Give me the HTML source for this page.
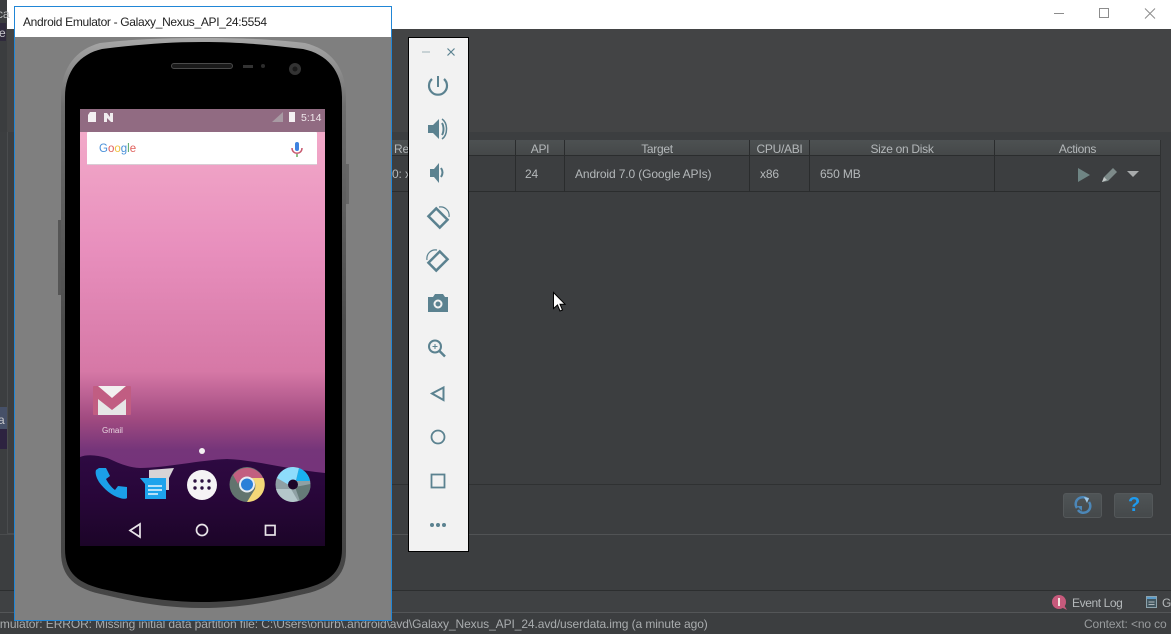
<!DOCTYPE html>
<html><head><meta charset="utf-8">
<style>
html,body{margin:0;padding:0;background:#3c3f41}
#r{position:relative;width:1171px;height:634px;overflow:hidden;background:#3c3e40;font-family:"Liberation Sans",sans-serif;font-size:12px;color:#b4b8ba}
.a{position:absolute}
.t{position:absolute;white-space:nowrap;letter-spacing:-.12px}
.hd{position:absolute;top:142px;height:15px;line-height:15px;text-align:center;color:#b3b7b9;font-size:12px;letter-spacing:-.3px}
.sep{position:absolute;width:1px;background:#2a2c2d}
</style></head><body>
<div id="r">
<!-- app chrome -->
<div class="a" style="left:0;top:0;width:1171px;height:29px;background:#fff"></div>
<div class="a" style="left:0;top:29px;width:1171px;height:103px;background:#434445"></div>
<div class="a" style="left:0;top:132px;width:1171px;height:458px;background:#3c3e40"></div>
<svg class="a" style="left:1050px;top:5px" width="115" height="18" fill="none" stroke="#8c8c8c" stroke-width="1">
<path d="M4 8.500H14"/><rect x="49.500" y="3.500" width="9" height="9"/><path d="M95 3.500L105 13.500M105 3.500L95 13.500"/>
</svg>
<div class="a" style="left:0;top:0;width:7px;height:132px;background:#3b3d3f"></div>
<div class="a" style="left:0;top:23px;width:6px;height:18px;background:#2f2a3c"></div>
<div class="t" style="left:-3px;top:7px;font-size:12px;line-height:14px;color:#b8babb">ca</div>
<div class="t" style="left:-1px;top:26px;font-size:12px;line-height:14px;color:#c8c8cc">e</div>
<div class="a" style="left:0;top:407px;width:7px;height:22px;background:#465068"></div>
<div class="a" style="left:0;top:429px;width:7px;height:20px;background:#2d2340"></div>
<div class="t" style="left:-2px;top:413px;font-size:12px;line-height:14px;color:#c8c8cc">a</div>
<div class="a" style="left:7px;top:132px;width:7px;height:402px;border-left:1px solid #4a4c4e;border-bottom:1px solid #4a4c4e;box-sizing:border-box"></div>
<div class="a" style="left:0;top:534px;width:14px;height:1px;background:#4a4c4e"></div>

<!-- table -->
<div class="a" style="left:392px;top:140px;width:768px;height:15px;background:linear-gradient(#4d5152,#454849)"></div>
<div class="a" style="left:392px;top:155px;width:768px;height:1px;background:#2b2d2e"></div>
<div class="a" style="left:392px;top:191px;width:768px;height:1px;background:#2b2d2e"></div>
<div class="a" style="left:1160px;top:140px;width:1px;height:344px;background:#2f3132"></div>
<div class="a" style="left:392px;top:484px;width:769px;height:1px;background:#2f3132"></div>
<div class="sep" style="left:515px;top:140px;height:52px"></div>
<div class="sep" style="left:564px;top:140px;height:52px"></div>
<div class="sep" style="left:749px;top:140px;height:52px"></div>
<div class="sep" style="left:809px;top:140px;height:52px"></div>
<div class="sep" style="left:994px;top:140px;height:52px"></div>
<div class="t" style="left:394px;top:142px;color:#b3b7b9;line-height:15px">Re</div>
<div class="hd" style="left:516px;width:48px">API</div>
<div class="hd" style="left:565px;width:184px">Target</div>
<div class="hd" style="left:750px;width:59px">CPU/ABI</div>
<div class="hd" style="left:810px;width:184px">Size on Disk</div>
<div class="hd" style="left:995px;width:165px">Actions</div>
<div class="t" style="left:392px;top:167px">0: x</div>
<div class="t" style="left:525px;top:167px">24</div>
<div class="t" style="left:575px;top:167px">Android 7.0 (Google APIs)</div>
<div class="t" style="left:760px;top:167px">x86</div>
<div class="t" style="left:820px;top:167px">650 MB</div>
<svg class="a" style="left:1070px;top:162px" width="75" height="24">
<path d="M8 6L20 13L8 20Z" fill="#6f8584"/>
<path d="M32 20L34 15L43 6L47 10L38 19Z" fill="#7d8a89"/><path d="M32 20L34 15L37 18Z" fill="#c4c8c8"/>
<path d="M57 9H69L63 15Z" fill="#a8abac"/>
</svg>

<!-- buttons -->
<div class="a" style="left:1063px;top:493px;width:39px;height:25px;box-sizing:border-box;border:1px solid #54585a;border-radius:3px;background:linear-gradient(#4f5456,#45494b)"></div>
<div class="a" style="left:1114px;top:493px;width:39px;height:25px;box-sizing:border-box;border:1px solid #54585a;border-radius:3px;background:linear-gradient(#4f5456,#45494b)"></div>
<svg class="a" style="left:1074px;top:495px" width="18" height="20" fill="none" stroke="#4c87b8" stroke-width="2.500">
<path d="M14 5A6.500 6.500 0 0 0 3 13"/><path d="M4 15A6.500 6.500 0 0 0 15 7"/><path d="M10 2L15 3L13 8Z" fill="#9cc6e6" stroke="none"/><path d="M3 11H8V16Z" fill="#4c87b8" stroke="none"/>
</svg>
<div class="t" style="left:1128px;top:493px;font:bold 20px/25px 'Liberation Sans',sans-serif;color:#1d9bf0">?</div>
<div class="a" style="left:392px;top:534px;width:779px;height:1px;background:#515355"></div>

<!-- status bars -->
<div class="a" style="left:0;top:590px;width:1171px;height:1px;background:#2c2e2f"></div>
<div class="a" style="left:0;top:591px;width:1171px;height:22px;background:#3f4143"></div>
<div class="a" style="left:0;top:612px;width:1171px;height:1px;background:#545658"></div>
<div class="a" style="left:0;top:613px;width:1171px;height:21px;background:#3c3e40"></div>
<svg class="a" style="left:1050px;top:594px" width="20" height="18"><circle cx="9" cy="8" r="7" fill="#c75a7c"/><path d="M11 13L17 16L14 11Z" fill="#c75a7c"/><rect x="8" y="4" width="2" height="8" fill="#f4e4e0"/></svg>
<div class="t" style="left:1072px;top:596px;color:#b4b8ba;font-size:12px;line-height:14px;letter-spacing:-.4px">Event Log</div>
<svg class="a" style="left:1145px;top:595px" width="13" height="14"><rect x="1.500" y="1.500" width="10" height="11" fill="#42565f" stroke="#8da3ad"/><rect x="2" y="2" width="9" height="2" fill="#5b9bc9"/><path d="M3.500 7H9.500M3.500 9.500H9.500" stroke="#aeb6ba"/></svg>
<div class="t" style="left:1162px;top:596px;line-height:14px">G</div>
<div class="t" style="left:-8px;top:617px;font-size:12px;line-height:14px;color:#a9acae;letter-spacing:-.09px">Emulator: ERROR: Missing initial data partition file: C:\Users\onurb\.android\avd\Galaxy_Nexus_API_24.avd/userdata.img (a minute ago)</div>
<div class="t" style="left:1084px;top:617px;line-height:14px;color:#989b9d">Context: &lt;no co</div>

<!-- cursor -->
<svg class="a" style="left:550px;top:291px" width="16" height="22"><path d="M3.500 1.500V17.500L7.500 14L10 20L12.500 19L10 13.200H15Z" fill="#fff" stroke="#000"/></svg>

<!-- emulator window -->
<div class="a" style="left:14px;top:6px;width:378px;height:615px;box-sizing:border-box;border:1px solid #2186d6;background:#7f7f7f"></div>
<div class="a" style="left:15px;top:7px;width:376px;height:30px;background:#fff"></div>
<div class="t" style="left:23px;top:14px;font-size:12px;line-height:16px;color:#222;letter-spacing:-.32px">Android Emulator - Galaxy_Nexus_API_24:5554</div>

<!-- phone -->
<svg class="a" style="left:15px;top:37px" width="376" height="583">
<defs>
<linearGradient id="w" x1="0" y1="0" x2="0" y2="1">
<stop offset="0" stop-color="#f4aecb"/><stop offset=".32" stop-color="#e88fbd"/><stop offset=".44" stop-color="#e085b3"/><stop offset=".6" stop-color="#d678a6"/><stop offset=".71" stop-color="#a04a80"/><stop offset=".78" stop-color="#75357a"/><stop offset="1" stop-color="#74307a"/>
</linearGradient>
<linearGradient id="d" x1="0" y1="0" x2="0" y2="1"><stop offset="0" stop-color="#2e0a42"/><stop offset=".5" stop-color="#270638"/><stop offset="1" stop-color="#1c0528"/></linearGradient>
<linearGradient id="e" x1="0" y1="0" x2="0" y2="1"><stop offset="0" stop-color="#a8a8a8"/><stop offset=".12" stop-color="#6e6e6e"/><stop offset=".5" stop-color="#4c4c4c"/><stop offset="1" stop-color="#454545"/></linearGradient>
</defs>
<path d="M46 60C46 30 62 12 85 6C120 2 150 1 187 1C225 1 255 2 290 6C315 12 331 30 331 60V515C331 540 315 552 285 558C255 565 225 571 187 571C150 571 120 565 90 558C60 552 46 540 46 515Z" fill="url(#e)"/>
<path d="M50 60C50 34 65 17 87 12C120 8 150 5 187 5C225 5 255 8 288 12C312 17 327 34 327 60V512C327 536 313 547 283 553C255 559 225 565 187 565C150 565 120 559 92 553C63 547 50 536 50 512Z" fill="#000"/>
<rect x="156.500" y="26.500" width="61" height="5" rx="2.500" fill="#1a1a1a" stroke="#4a4a4a"/>
<rect x="228" y="28" width="10" height="3" fill="#333"/><circle cx="248" cy="29" r="2" fill="#2c2c2c"/>
<circle cx="280" cy="32" r="6" fill="#333"/><circle cx="280" cy="32" r="2.500" fill="#1a1a1a"/>
<rect x="331" y="127" width="3" height="40" fill="#666"/><rect x="43" y="183" width="3" height="75" fill="#555"/>

<rect x="65" y="72" width="245" height="437" fill="url(#w)"/>
<rect x="65" y="72" width="245" height="23" fill="#916b82"/>
<path d="M73 85V78L75 75H81V85Z" fill="#f4f0f2"/>
<path d="M89 76V85H92V81L96 85H98V76H95V80L92 76Z" fill="#f0ecee"/>
<path d="M257 85L268 75V85Z" fill="#a89aa3"/>
<rect x="274" y="75" width="6" height="10" fill="#f4f0f2"/>
<text x="286" y="84" font-family="Liberation Sans" font-size="10.500" fill="#f0e8ec">5:14</text>

<rect x="72" y="95" width="230" height="33" rx="1" fill="#fff"/>
<rect x="72" y="127" width="230" height="1" fill="#d8ccd4"/>
<text x="84" y="115" font-family="Liberation Sans" font-size="11.500"><tspan fill="#4a90d9">G</tspan><tspan fill="#e0605c">o</tspan><tspan fill="#f0c040">o</tspan><tspan fill="#4a90d9">g</tspan><tspan fill="#58a868">l</tspan><tspan fill="#e0605c">e</tspan></text>
<rect x="280" y="105" width="4" height="9" rx="2" fill="#3f83e0"/><path d="M277 111C277 118 287 118 287 111" fill="none" stroke="#c85a70" stroke-width="1.500"/><path d="M282 117V120" stroke="#6aa860" stroke-width="1.500"/>

<!-- gmail -->
<rect x="78" y="349" width="38" height="29" rx="1" fill="#c15d82"/>
<path d="M83 349H111L97 361Z" fill="#f2f0f0"/>
<path d="M83 362L97 373L111 362V378H83Z" fill="#e6e6e6"/>
<text x="87" y="396" font-family="Liberation Sans" font-size="8" fill="#e8d4e0">Gmail</text>

<circle cx="187" cy="414" r="3" fill="#f3f0f2"/>
<path d="M65 420C72 417 82 418 92 421C102 425 110 430 125 431C150 431 185 423 212 422C240 423 270 432 310 436V509H65Z" fill="url(#d)"/>

<!-- phone icon -->
<path d="M81 433C80 436 81 440 84 445C89 452 97 459 105 461C108 462 111 462 112 461V450L103 449L100 453C96 450 93 446 91 442L95 439L91 431L84 431Z" fill="#1b9fe8"/>
<!-- messenger -->
<path d="M134 433L159 431L154 441V453H134Z" fill="#d8d4d6"/>
<path d="M125 441H151V462H130V447Z" fill="#1ea3ec"/>
<path d="M133 449H147M133 453H147M133 457H143" stroke="#e8f4fb" stroke-width="1.500"/>
<!-- apps -->
<circle cx="187" cy="448" r="15" fill="#f5f3f5"/>
<g fill="#2c1040"><circle cx="180" cy="444" r="1.700"/><circle cx="187" cy="444" r="1.700"/><circle cx="194" cy="444" r="1.700"/><circle cx="180" cy="451" r="1.700"/><circle cx="187" cy="451" r="1.700"/><circle cx="194" cy="451" r="1.700"/></g>
<!-- chrome -->
<circle cx="232" cy="447.500" r="17.500" fill="#62746e"/>
<path d="M218 438A17.500 17.500 0 0 1 248 441L232 441C226 441 224 444 223 447Z" fill="#c25f80"/>
<path d="M248.500 441A17.500 17.500 0 0 1 232 465L240 452C241 447 240 443 236 441Z" fill="#f4d878"/>
<circle cx="232" cy="447.500" r="8" fill="#e9edf2"/><circle cx="232" cy="447.500" r="6" fill="#2b80d8"/>
<!-- circle -->
<circle cx="278" cy="447.500" r="17.500" fill="#8fa0a4"/>
<path d="M278 430A17.500 17.500 0 0 0 262 441L274 448L281 443L284 431Z" fill="#8ddcfc"/>
<path d="M284 431A17.500 17.500 0 0 1 295 444H281Z" fill="#18b0f0"/>
<path d="M295.500 447A17.500 17.500 0 0 1 285 464L280 450Z" fill="#657a78"/>
<path d="M261 452A17.500 17.500 0 0 0 278 465L283 464L276 452Z" fill="#b4c6ca"/>
<circle cx="278" cy="447.500" r="5" fill="#1c0528"/>
<!-- nav -->
<path d="M115 493.500L125 487V500Z" fill="none" stroke="#e8e4e8" stroke-width="1.700"/>
<circle cx="187" cy="493" r="5.500" fill="none" stroke="#e8e4e8" stroke-width="1.700"/>
<rect x="250.500" y="488.500" width="9.500" height="9.500" fill="none" stroke="#e8e4e8" stroke-width="1.700"/>
</svg>

<!-- toolbar -->
<div class="a" style="left:408px;top:37px;width:61px;height:515px;box-sizing:border-box;border:1px solid #000;background:#f2f2f2"></div>
<svg class="a" style="left:409px;top:38px" width="59" height="513" fill="none" stroke="#5b8290" stroke-width="2">
<path d="M13 14H21" stroke="#9fb2b8" stroke-width="1"/>
<path d="M38.500 10.500L45.500 17.500M45.500 10.500L38.500 17.500" stroke-width="1.200"/>
<!-- power -->
<path d="M29 38V49" stroke-width="2"/><path d="M23 41A9 9 0 1 0 35 41" stroke-width="2.200"/>
<!-- vol up -->
<path d="M19 87H24L30 81V101L24 95H19Z" fill="#5b8290" stroke="none"/>
<path d="M33 85C35 88 35 94 33 97" stroke-width="2"/><path d="M33 81C39 85 39 97 33 101" stroke-width="1.500"/>
<!-- vol down -->
<path d="M21 131H25L30 125V145L25 139H21Z" fill="#5b8290" stroke="none"/><path d="M32 130C34 133 34 136 32 139" stroke-width="2"/>
<!-- rotate right -->
<rect x="23.500" y="172" width="11" height="16" transform="rotate(-45 29 180)" stroke-width="2.500"/>
<path d="M30 169C36 168 41 173 40 179" stroke-width="1.200"/>
<!-- rotate left -->
<rect x="23.500" y="215" width="11" height="16" transform="rotate(45 29 223)" stroke-width="2.500"/>
<path d="M18 222C17 216 22 211 28 212" stroke-width="1.200"/>
<!-- camera -->
<path d="M19 259H24L26 256H34L36 259H39V274H19Z" fill="#5b8290" stroke="none"/><circle cx="29" cy="266" r="3.500" stroke="#f2f2f2" stroke-width="2"/>
<!-- zoom -->
<circle cx="26" cy="308.500" r="6" stroke-width="2"/><path d="M30.500 313L36 318.500" stroke-width="2.500"/><path d="M23.500 308.500H28.500M26 306V311" stroke-width="1"/>
<!-- back -->
<path d="M23 355.500L34.500 349.500V362Z" stroke-width="2"/>
<circle cx="29" cy="399" r="6.500" stroke-width="1.800"/>
<rect x="22.500" y="436.500" width="13" height="13" stroke-width="1.800"/>
<g fill="#5b8290" stroke="none"><circle cx="23" cy="487" r="2"/><circle cx="29" cy="487" r="2"/><circle cx="35" cy="487" r="2"/></g>
</svg>
</div>
</body></html>
